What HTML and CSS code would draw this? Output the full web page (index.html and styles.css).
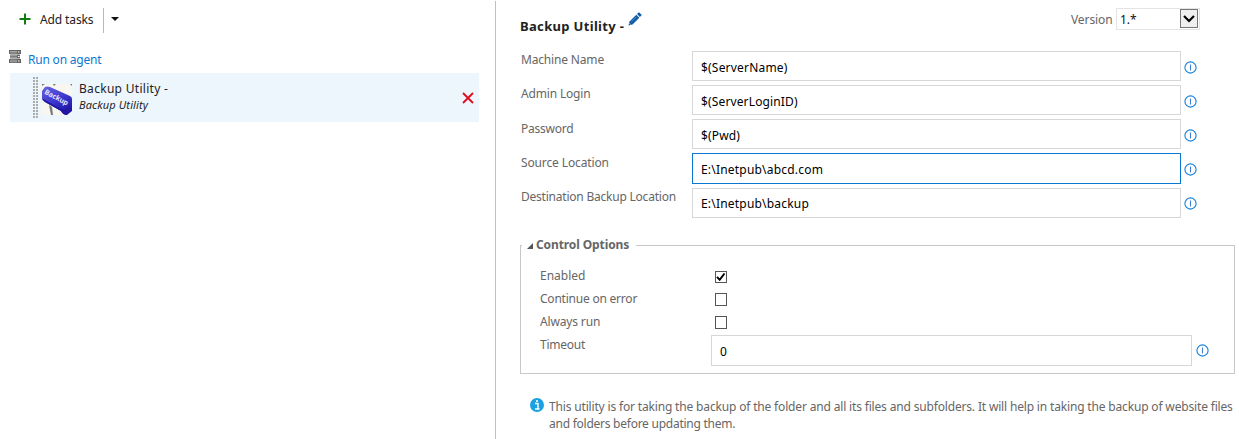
FILE: index.html
```html
<!DOCTYPE html>
<html lang="en">
<head>
<meta charset="utf-8">
<title>Backup Utility</title>
<link rel="stylesheet" href="styles.css">
</head>
<body>
<svg width="0" height="0" class="defs">
  <symbol id="info" viewBox="0 0 13 13"><circle cx="6.5" cy="6.5" r="5.6" fill="none" stroke="#1680da" stroke-width="1.1"/><path d="M6.5 3.5v6" stroke="#3f7fdc" stroke-width="1.1"/></symbol>
</svg>
<div class="app">
  <aside class="tasks">
    <div class="toolbar">
      <svg class="plus" width="12" height="12" viewBox="0 0 12 12"><path d="M6 0.5v11M.5 6h11" stroke="#107c10" stroke-width="2"/></svg>
      <span class="add">Add tasks</span>
      <span class="divider"></span>
      <svg class="caret" width="8" height="4" viewBox="0 0 8 4"><path d="M0 0h8L4 4z" fill="#111"/></svg>
    </div>
    <div class="agent">
      <svg width="12" height="13" viewBox="0 0 12 13"><path d="M0 0h12v4H0zM1 4.5h10v4H1zM0 9h12v4H0z" fill="#666"/><path d="M1 1.5h7M1 3h7M1 5.7h7M1 7.3h7M1 10.2h7M1 11.8h7" stroke="#c4c4c4" stroke-width=".7"/><path d="M9 2h1.5M9 6.5h1.5M9 11h1.5" stroke="#fff"/></svg>
      <span>Run on agent</span>
    </div>
    <div class="task">
      <span class="grip"></span>
      <svg class="thumb" width="30" height="31" viewBox="0 0 30 31">
        <defs><linearGradient id="key" x1="0" y1="0" x2=".5" y2="1"><stop offset="0" stop-color="#6664df"/><stop offset=".6" stop-color="#3b35cf"/><stop offset="1" stop-color="#2117a4"/></linearGradient></defs>
        <path d="M0 0h30v31H0z" fill="#f7f7f0"/>
        <path d="M0 0h3L0 2zM11 0h3l-2 2zM28 0h2v2zM7 21l3 2 1 8H9z" fill="#77777c"/>
        <path d="M0 7l3-4q2-1 5 0l20 9q2 1 2 3v12l-5 4q-4 0-6-4L3 18q-3-2-3-4z" fill="url(#key)"/>
        <path d="M0 14l3 2 16 9 6 2v4q-4 0-6-4L3 18q-3-2-3-4z" fill="#2017a0"/>
        <text class="key-text" transform="translate(2 9.5) rotate(28)">Backup</text>
      </svg>
      <div class="names"><span class="name">Backup Utility -</span><em>Backup Utility</em></div>
      <svg class="remove" width="12" height="12" viewBox="0 0 12 12"><path d="M1 1l10 10M11 1L1 11" stroke="#e00b1c" stroke-width="1.8"/></svg>
    </div>
  </aside>
  <main class="details">
    <header class="head">
      <h1>Backup Utility -</h1>
      <svg class="pencil" width="14" height="14" viewBox="0 0 14 14"><path d="M.5 13.5l1-4 6.8-6.7 3 3-6.8 6.7zM9 2.1L11 .2l2.8 2.7-1.9 2z" fill="#0f5ba7"/><path d="M3.5 9.8l5-5" stroke="#6fa2d2" stroke-width=".7"/><path d="M1.4 11.2l1.4 1.4" stroke="#fff" stroke-width=".7"/></svg>
      <span class="version">Version</span>
      <div class="select"><span>1.*</span><span class="arrow"><svg width="12" height="8" viewBox="0 0 12 8"><path d="M1 1l5 5 5-5" fill="none" stroke="#000" stroke-width="2.2"/></svg></span></div>
    </header>
    <div class="form">
      <div class="row first"><label class="l1">Machine Name</label><div class="input"><span class="v1">$(ServerName)</span></div><svg class="info"><use href="#info"/></svg></div>
      <div class="row first"><label class="l2">Admin Login</label><div class="input"><span class="v2">$(ServerLoginID)</span></div><svg class="info"><use href="#info"/></svg></div>
      <div class="row"><label class="l3">Password</label><div class="input"><span class="v3">$(Pwd)</span></div><svg class="info"><use href="#info"/></svg></div>
      <div class="row active"><label class="l4">Source Location</label><div class="input"><span class="v4">E:\Inetpub\abcd.com</span></div><svg class="info"><use href="#info"/></svg></div>
      <div class="row last"><label class="l5">Destination Backup Location</label><div class="input"><span class="v5">E:\Inetpub\backup</span></div><svg class="info"><use href="#info"/></svg></div>
    </div>
    <section class="options">
      <div class="legend"><i class="stub"></i><svg width="6" height="6" viewBox="0 0 6 6"><path d="M6 0v6H0z" fill="#555"/></svg><b>Control Options</b><i class="rule"></i></div>
      <div class="group">
        <div class="opt"><label>Enabled</label><span class="check"><svg width="10" height="10" viewBox="0 0 10 10"><path d="M1 4.8l2.7 3L8.5 1.5" fill="none" stroke="#000" stroke-width="2"/></svg></span></div>
        <div class="opt"><label class="o2">Continue on error</label><span class="check"></span></div>
        <div class="opt"><label class="o3">Always run</label><span class="check"></span></div>
        <div class="opt timeout"><label class="o4">Timeout</label><div class="input"><span>0</span></div><svg class="info"><use href="#info"/></svg></div>
      </div>
    </section>
    <div class="note">
      <svg width="14" height="14" viewBox="0 0 14 14"><circle cx="7" cy="7" r="7" fill="#1ba1e2"/><path d="M5 5.5h3v5M5 11h4.5" fill="none" stroke="#fff" stroke-width="1.4"/><circle cx="7" cy="3" r="1.1" fill="#fff"/></svg>
      <p><span class="n1">This utility is for taking the backup of the folder and all its files and subfolders. It will help in taking the backup of website files</span><br><span class="n2">and folders before updating them.</span></p>
    </div>
  </main>
</div>
</body>
</html>
```
FILE: styles.css
```css
* { box-sizing: border-box; }
body { margin: 0; background: #fff; font: 12px/17px "Noto Sans", "Open Sans", sans-serif; color: #666; overflow: hidden; }
svg { display: block; flex: none; }
span, label, b, h1, em { white-space: nowrap; }
.defs { display: none; }
.app { display: flex; height: 439px; }
.tasks { width: 495px; flex: none; }
.toolbar { height: 46px; display: flex; align-items: flex-start; color: #222; }
.plus { margin: 13px 0 0 19px; }
.add { margin: 11px 0 0 9px; width: 53px; letter-spacing: -0.12px; }
.divider { width: 1px; height: 25px; background: #b8b8b8; margin: 8px 0 0 10px; }
.caret { margin: 17px 0 0 7px; }
.agent { height: 27px; display: flex; padding: 4px 0 0 9px; gap: 7px; color: #0b78d4; letter-spacing: -0.2px; }
.agent span { padding-top: 1px; }
.task { margin-left: 10px; width: 469px; height: 49px; background: #eef6fd; display: flex; align-items: flex-start; color: #222; }
.grip { width: 5px; height: 42px; margin: 4px 0 0 23px; background: repeating-linear-gradient(#a9abad 0 2px, #eef6fd 2px 3px); position: relative; }
.grip::after { content: ""; position: absolute; left: 2px; top: 0; width: 1px; height: 100%; background: #eef6fd; }
.thumb { margin: 11px 0 0 4px; }
.key-text { font: bold 7px "Noto Sans", sans-serif; fill: #e4e4ff; }
.names { margin: 7px 0 0 7px; display: flex; flex-direction: column; width: 378px; }
.name { height: 17px; letter-spacing: 0.3px; }
.names em { font-size: 11px; line-height: 16px; letter-spacing: 0.13px; }
.remove { margin-top: 19px; margin-left: 5px; }
.details { flex: 1; min-width: 0; border-left: 1px solid #c0c0c0; margin-top: 1px; padding-left: 24px; }
.head { height: 50px; display: flex; align-items: flex-start; }
h1 { margin: 16px 0 0; font-size: 13px; line-height: 18px; color: #222; width: 103px; letter-spacing: 0.33px; }
.pencil { margin: 11px 0 0 5px; }
.version { margin: 10px 0 0 429px; width: 41px; letter-spacing: -0.1px; }
.select { width: 84px; height: 22px; margin: 7px 0 0 4px; border: 1px solid #e4e4e4; display: flex; justify-content: space-between; padding-left: 3px; color: #111; line-height: 21px; }
.arrow { width: 18px; height: 19px; margin-right: 1px; border: 1px solid #777; background: #efefef; display: flex; align-items: center; justify-content: center; }
.row { height: 34px; display: flex; align-items: flex-start; padding-left: 1px; }
.row label { width: 171px; margin-top: 1px; }
.first label { margin-top: 0; }
.l1, .l2 { letter-spacing: -0.17px; }
.l3 { letter-spacing: -0.25px; }
.l4 { letter-spacing: -0.13px; }
.l5 { letter-spacing: -0.22px; }
.v1, .v4, .v5 { letter-spacing: 0.2px; }
.v2, .v3 { letter-spacing: 0.14px; }
.input { width: 489px; height: 30px; border: 1px solid #d7d7d7; background: #fff; padding: 7px 0 0 8px; color: #000; }
.info { width: 13px; height: 13px; margin: 10px 0 0 3px; }
.active { height: 35px; }
.active .input { height: 31px; border-color: #0a78d0; }
.last label { margin-top: 0; }
.last .input { padding-top: 6px; }
.last .info { margin-top: 9px; }
.options { margin: 13px 0 0; width: 715px; }
.legend { height: 18px; display: flex; align-items: center; margin-bottom: -8px; position: relative; }
.legend b { margin-left: 3px; width: 93px; letter-spacing: -0.1px; }
.legend svg { margin: 3px 0 0 5px; }
.stub { width: 2px; height: 1px; margin-top: 3px; background: #c8c8c8; }
.rule { flex: 1; height: 1px; background: #c8c8c8; margin: 3px 0 0 7px; }
.group { height: 129px; border: 1px solid #c8c8c8; border-top: 0; padding: 22px 0 0 19px; }
.opt { height: 23px; display: flex; align-items: flex-start; }
.opt label { width: 175px; }
.o2 { letter-spacing: -0.22px; }
.o3 { letter-spacing: -0.15px; }
.o4 { letter-spacing: -0.25px; }
.check { width: 12px; height: 12px; border: 1px solid #555; margin-top: 4px; }
.opt + .opt .check { margin-top: 3px; height: 13px; }
.timeout label { width: 171px; }
.timeout .input { width: 481px; height: 31px; margin-top: -1px; }
.timeout .info { margin: 8px 0 0 4px; }
.note { display: flex; margin: 24px 0 0 10px; align-items: flex-start; gap: 5px; }
.note p { margin: 0; }
.n1 { letter-spacing: -0.165px; }
.n2 { letter-spacing: -0.25px; }
```
